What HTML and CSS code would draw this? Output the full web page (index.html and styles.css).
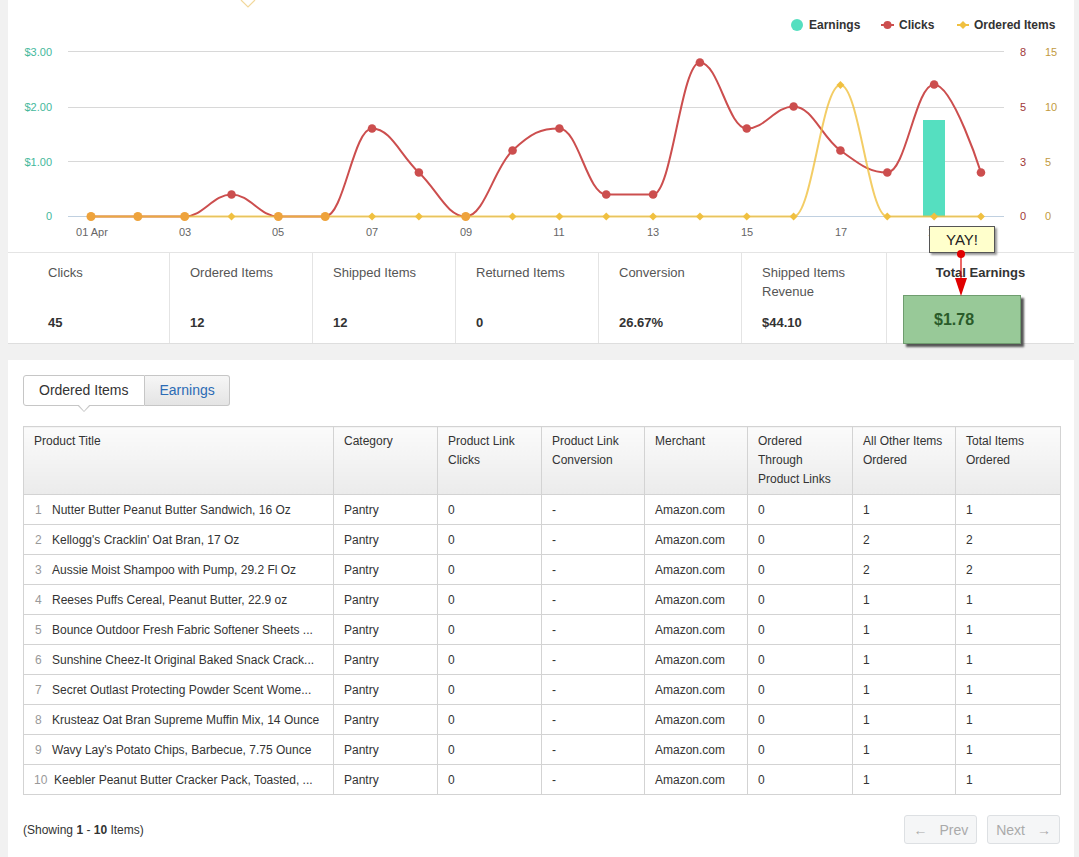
FILE: index.html
```html
<!DOCTYPE html>
<html lang="en">
<head>
<meta charset="utf-8">
<title>Earnings Report</title>
<link rel="stylesheet" href="styles.css">
</head>
<body>
<div class="page">
  <section class="panel summary">
    <div class="chart">
      <svg id="plot" width="1066" height="252" viewBox="0 0 1066 252">
        <polyline points="233,0 240,7 247,0" class="deco"/>
        <g class="legend">
          <circle cx="789" cy="25" r="6" fill="#55dfc0"/>
          <text x="801" y="29">Earnings</text>
          <line x1="873" y1="25" x2="886" y2="25" stroke="#cc4e4e" stroke-width="2"/>
          <circle cx="879.5" cy="25" r="4" fill="#cc4e4e"/>
          <text x="891" y="29">Clicks</text>
          <line x1="949" y1="25" x2="961" y2="25" stroke="#f0c040" stroke-width="2"/>
          <polygon points="955,21 959,25 955,29 951,25" fill="#f0c040"/>
          <text x="966" y="29">Ordered Items</text>
        </g>
        <g class="grid-lines">
          <line x1="60" y1="51.5" x2="996" y2="51.5"/>
          <line x1="60" y1="107.5" x2="996" y2="107.5"/>
          <line x1="60" y1="161.5" x2="996" y2="161.5"/>
        </g>
        <line class="zero-line" x1="60" y1="216.5" x2="996" y2="216.5"/>
        <g class="axis-left">
          <text x="44" y="56">$3.00</text>
          <text x="44" y="111">$2.00</text>
          <text x="44" y="166">$1.00</text>
          <text x="44" y="220">0</text>
        </g>
        <g class="axis-right-a">
          <text x="1012" y="56">8</text>
          <text x="1012" y="111">5</text>
          <text x="1012" y="166">3</text>
          <text x="1012" y="220">0</text>
        </g>
        <g class="axis-right-b">
          <text x="1037" y="56">15</text>
          <text x="1037" y="111">10</text>
          <text x="1037" y="166">5</text>
          <text x="1037" y="220">0</text>
        </g>
        <g class="axis-x">
          <text x="84" y="236">01 Apr</text>
          <text x="177" y="236">03</text>
          <text x="270" y="236">05</text>
          <text x="364" y="236">07</text>
          <text x="458" y="236">09</text>
          <text x="551" y="236">11</text>
          <text x="645" y="236">13</text>
          <text x="739" y="236">15</text>
          <text x="833" y="236">17</text>
          <text x="926" y="236">19</text>
        </g>
        <rect x="915" y="120" width="22" height="96.5" fill="#55dfc0"/>
        <g id="series"></g>
      </svg>
    </div>
    <div class="stats">
      <div class="stat first"><div class="label">Clicks</div><div class="value">45</div></div>
      <div class="stat"><div class="label">Ordered Items</div><div class="value">12</div></div>
      <div class="stat"><div class="label">Shipped Items</div><div class="value">12</div></div>
      <div class="stat"><div class="label">Returned Items</div><div class="value">0</div></div>
      <div class="stat"><div class="label">Conversion</div><div class="value">26.67%</div></div>
      <div class="stat"><div class="label">Shipped Items Revenue</div><div class="value">$44.10</div></div>
      <div class="stat total"><div class="label">Total Earnings</div><div class="earn-box">$1.78</div></div>
    </div>
    <div class="yay">YAY!</div>
    <svg class="yay-pointer" width="14" height="48" viewBox="0 0 14 48">
      <line x1="7" y1="5" x2="7" y2="30" stroke="#e00000" stroke-width="1.2"/>
      <polygon points="1,29 13,29 7,47" fill="#e00000"/>
      <circle cx="7" cy="5" r="4" fill="#e00000"/>
    </svg>
  </section>

  <section class="panel report">
    <div class="tabs">
      <div class="tab active">Ordered Items</div>
      <div class="tab inactive">Earnings</div>
    </div>
    <table class="grid">
      <colgroup>
        <col style="width:310px"><col style="width:104px"><col style="width:104px"><col style="width:103px">
        <col style="width:103px"><col style="width:105px"><col style="width:103px"><col style="width:105px">
      </colgroup>
      <thead>
        <tr>
          <th>Product Title</th>
          <th>Category</th>
          <th>Product Link Clicks</th>
          <th>Product Link Conversion</th>
          <th>Merchant</th>
          <th>Ordered Through Product Links</th>
          <th>All Other Items Ordered</th>
          <th>Total Items Ordered</th>
        </tr>
      </thead>
      <tbody>
        <tr><td><span class="num">1</span>Nutter Butter Peanut Butter Sandwich, 16 Oz</td><td>Pantry</td><td>0</td><td>-</td><td>Amazon.com</td><td>0</td><td>1</td><td>1</td></tr>
        <tr><td><span class="num">2</span>Kellogg's Cracklin' Oat Bran, 17 Oz</td><td>Pantry</td><td>0</td><td>-</td><td>Amazon.com</td><td>0</td><td>2</td><td>2</td></tr>
        <tr><td><span class="num">3</span>Aussie Moist Shampoo with Pump, 29.2 Fl Oz</td><td>Pantry</td><td>0</td><td>-</td><td>Amazon.com</td><td>0</td><td>2</td><td>2</td></tr>
        <tr><td><span class="num">4</span>Reeses Puffs Cereal, Peanut Butter, 22.9 oz</td><td>Pantry</td><td>0</td><td>-</td><td>Amazon.com</td><td>0</td><td>1</td><td>1</td></tr>
        <tr><td><span class="num">5</span>Bounce Outdoor Fresh Fabric Softener Sheets ...</td><td>Pantry</td><td>0</td><td>-</td><td>Amazon.com</td><td>0</td><td>1</td><td>1</td></tr>
        <tr><td><span class="num">6</span>Sunshine Cheez-It Original Baked Snack Crack...</td><td>Pantry</td><td>0</td><td>-</td><td>Amazon.com</td><td>0</td><td>1</td><td>1</td></tr>
        <tr><td><span class="num">7</span>Secret Outlast Protecting Powder Scent Wome...</td><td>Pantry</td><td>0</td><td>-</td><td>Amazon.com</td><td>0</td><td>1</td><td>1</td></tr>
        <tr><td><span class="num">8</span>Krusteaz Oat Bran Supreme Muffin Mix, 14 Ounce</td><td>Pantry</td><td>0</td><td>-</td><td>Amazon.com</td><td>0</td><td>1</td><td>1</td></tr>
        <tr><td><span class="num">9</span>Wavy Lay's Potato Chips, Barbecue, 7.75 Ounce</td><td>Pantry</td><td>0</td><td>-</td><td>Amazon.com</td><td>0</td><td>1</td><td>1</td></tr>
        <tr><td><span class="num wide">10</span>Keebler Peanut Butter Cracker Pack, Toasted, ...</td><td>Pantry</td><td>0</td><td>-</td><td>Amazon.com</td><td>0</td><td>1</td><td>1</td></tr>
      </tbody>
    </table>
    <div class="footer">
      <div class="showing">(Showing <b>1</b> - <b>10</b> Items)</div>
      <div class="pager">
        <button class="pg"><span class="arr">&larr;</span>Prev</button>
        <button class="pg"><span class="txt">Next</span><span class="arr r">&rarr;</span></button>
      </div>
    </div>
  </section>
</div>
<script src="chart.js"></script>
</body>
</html>
```

FILE: styles.css
```css
* { box-sizing: border-box; }
html, body { margin: 0; padding: 0; }
body {
  background: #f1f1f1;
  font-family: "Liberation Sans", Arial, sans-serif;
  color: #333;
  width: 1079px;
  height: 857px;
  overflow: hidden;
}
.page { padding: 0 0 0 8px; }
.panel { background: #fff; width: 1066px; }

.summary { position: relative; border-bottom: 1px solid #dedede; }
.chart { height: 252px; }
.chart svg { display: block; }
.deco { fill: none; stroke: #f2d89c; stroke-width: 1.2; }
.legend text { font-size: 12px; font-weight: bold; fill: #333; }
.grid-lines line { stroke: #d8d8d8; stroke-width: 1; }
.zero-line { stroke: #c0d0e0; stroke-width: 1; }
.axis-left text { font-size: 11px; fill: #45b89c; text-anchor: end; }
.axis-right-a text { font-size: 11px; fill: #a03838; }
.axis-right-b text { font-size: 11px; fill: #c29a3e; }
.axis-x text { font-size: 11px; fill: #666; text-anchor: middle; }

.stats {
  display: grid;
  grid-template-columns: 161px 143px 143px 143px 143px 145px 1fr;
  grid-template-rows: 90px;
  border-top: 1px solid #e4e4e4;
  height: 91px;
}
.stat {
  border-left: 1px solid #e4e4e4;
  padding: 10px 12px 0 20px;
  font-size: 13px;
  line-height: 19px;
  min-height: 0;
}
.stat.first { border-left: none; padding-left: 40px; }
.stat .label { color: #555; height: 38px; }
.stat .value { margin-top: 12px; font-weight: bold; color: #333; }
.stat.total { padding-left: 16px; padding-right: 0; }
.stat.total .label {
  height: 19px;
  margin-left: -16px;
  text-align: center;
  font-weight: bold;
  color: #333;
}
.earn-box {
  position: relative;
  z-index: 2;
  margin-top: 13px;
  width: 118px;
  height: 49px;
  background: #98c998;
  border: 1px solid #6f9d6f;
  box-shadow: 3px 3px 2px #555;
  color: #2a5b2a;
  font-weight: bold;
  font-size: 16px;
  line-height: 47px;
  padding-left: 30px;
}

.yay {
  position: absolute;
  left: 921px;
  top: 226px;
  width: 66px;
  height: 27px;
  background: #ffffcc;
  border: 1px solid #555;
  box-shadow: 2px 2px 2px #999;
  text-align: center;
  font-size: 15px;
  line-height: 26px;
  color: #222;
  z-index: 3;
}
.yay-pointer { position: absolute; left: 946px; top: 249px; z-index: 4; }

.report {
  margin-top: 16px;
  padding: 15px 14px 40px 15px;
}
.tabs { display: flex; width: max-content; }
.tab {
  height: 31px;
  line-height: 29px;
  font-size: 14px;
  border: 1px solid #c6c6c6;
  padding: 0 14px;
}
.tab.active {
  position: relative;
  background: #fff;
  color: #333;
  border-radius: 3px 0 0 3px;
  padding: 0 16px 0 15px;
}
.tab.active::before, .tab.active::after {
  content: "";
  position: absolute;
  left: 50%;
  border-style: solid;
  border-color: transparent;
}
.tab.active::before {
  top: 100%;
  margin-left: -7px;
  border-width: 7px 7px 0 7px;
  border-top-color: #c6c6c6;
}
.tab.active::after {
  top: 100%;
  margin-left: -6px;
  margin-top: -1px;
  border-width: 7px 6px 0 6px;
  border-top-color: #fff;
}
.tab.inactive {
  background: linear-gradient(#f6f6f6, #e4e4e4);
  color: #2b6bb5;
  border-left: none;
  border-radius: 0 3px 3px 0;
}

.grid {
  margin-top: 20px;
  border-collapse: collapse;
  table-layout: fixed;
  width: 1037px;
  font-size: 12px;
  color: #333;
}
.grid th, .grid td {
  border: 1px solid #d3d3d3;
  text-align: left;
}
.grid th {
  font-weight: normal;
  vertical-align: top;
  padding: 5px 10px;
  line-height: 19px;
  height: 68px;
  background: linear-gradient(#fbfbfb, #ebebeb);
}
.grid td {
  height: 30px;
  padding: 0 10px;
  white-space: nowrap;
  overflow: hidden;
}
.num { display: inline-block; width: 13px; margin-right: 5px; color: #999; padding-left: 1px; }
.num.wide { width: 15px; padding-left: 0; margin-right: 5px; }

.footer {
  margin-top: 20px;
  display: flex;
  justify-content: space-between;
  align-items: center;
}
.showing { font-size: 12px; color: #333; }
.pager { display: flex; gap: 10px; }
.pg {
  height: 29px;
  padding: 0 8px;
  font-family: "Liberation Sans", Arial, sans-serif;
  font-size: 14px;
  color: #aaa;
  background: #f5f6f7;
  border: 1px solid #dde0e3;
  border-radius: 3px;
}
.pg .arr { margin-right: 12px; }
.pg .arr.r { margin-right: 0; margin-left: 12px; }
```

FILE: chart.js
```js
(function () {
  var NS = 'http://www.w3.org/2000/svg';
  var g = document.getElementById('series');
  var clicks = [0,0,0,1,0,0,4,2,0,3,4,1,1,7,4,5,3,2,6,2];
  var ordered = [0,0,0,0,0,0,0,0,0,0,0,0,0,0,0,0,12,0,0,0];
  var x0 = 83, dx = 46.84, base = 216.5;

  function pts(arr, k) {
    return arr.map(function (v, i) { return [x0 + i * dx, base - v * k]; });
  }

  function spline(p) {
    var n = p.length, L = [], R = [];
    for (var i = 0; i < n; i++) {
      var x = p[i][0], y = p[i][1];
      if (i > 0 && i < n - 1) {
        var px = p[i-1][0], py = p[i-1][1], nx = p[i+1][0], ny = p[i+1][1];
        var lcx = (1.5 * x + px) / 2.5, lcy = (1.5 * y + py) / 2.5;
        var rcx = (1.5 * x + nx) / 2.5, rcy = (1.5 * y + ny) / 2.5;
        var c = ((rcy - lcy) * (rcx - x)) / (rcx - lcx) + y - rcy;
        lcy += c; rcy += c;
        if (lcy > py && lcy > y) { lcy = Math.max(py, y); rcy = 2 * y - lcy; }
        else if (lcy < py && lcy < y) { lcy = Math.min(py, y); rcy = 2 * y - lcy; }
        if (rcy > ny && rcy > y) { rcy = Math.max(ny, y); lcy = 2 * y - rcy; }
        else if (rcy < ny && rcy < y) { rcy = Math.min(ny, y); lcy = 2 * y - rcy; }
        L[i] = [lcx, lcy]; R[i] = [rcx, rcy];
      } else {
        L[i] = [x, y]; R[i] = [x, y];
      }
    }
    var d = 'M' + p[0][0] + ' ' + p[0][1];
    for (var j = 1; j < n; j++) {
      d += ' C' + R[j-1][0] + ' ' + R[j-1][1] + ' ' + L[j][0] + ' ' + L[j][1] + ' ' + p[j][0] + ' ' + p[j][1];
    }
    return d;
  }

  function el(name, attrs) {
    var e = document.createElementNS(NS, name);
    for (var k in attrs) e.setAttribute(k, attrs[k]);
    g.appendChild(e);
    return e;
  }

  var cp = pts(clicks, 22);
  var op = pts(ordered, 10.96);

  el('path', { d: spline(cp), fill: 'none', stroke: '#cc4e4e', 'stroke-width': 2 });
  el('path', { d: spline(op), fill: 'none', stroke: '#f0c040', 'stroke-width': 2, 'stroke-opacity': 0.8 });

  cp.forEach(function (p, i) {
    if (clicks[i] !== 0) el('circle', { cx: p[0], cy: p[1], r: 4.3, fill: '#cc4e4e' });
  });
  op.forEach(function (p, i) {
    if (clicks[i] !== 0) {
      var x = p[0], y = p[1];
      el('polygon', { points: x + ',' + (y-4) + ' ' + (x+4) + ',' + y + ' ' + x + ',' + (y+4) + ' ' + (x-4) + ',' + y, fill: '#f0c040' });
    }
  });
  cp.forEach(function (p, i) {
    if (clicks[i] === 0) el('circle', { cx: p[0], cy: p[1], r: 4.5, fill: '#eea33c' });
  });
})();
```
